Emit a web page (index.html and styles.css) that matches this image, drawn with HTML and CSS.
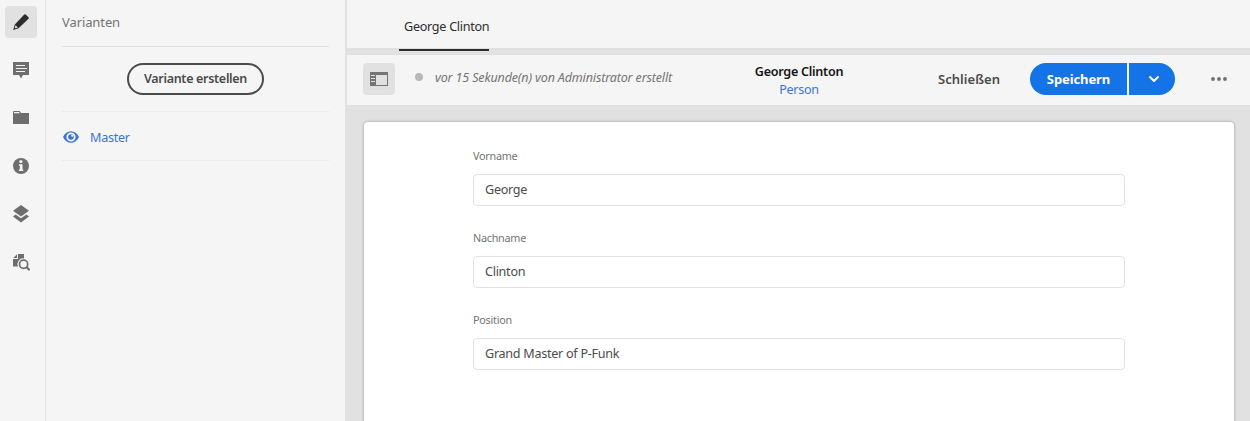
FILE: index.html
```html
<!DOCTYPE html>
<html lang="de">
<head>
<meta charset="utf-8">
<title>George Clinton</title>
<link rel="stylesheet" href="styles.css">
</head>
<body>
<div class="app">
  <nav class="rail">
    <a class="rail-item active"><svg width="18" height="18" viewBox="0 0 18 18"><path fill="#2c2c2c" d="M12.300 1.600a1 1 0 0 1 1.400 0l2.800 2.700a1 1 0 0 1 0 1.400L6.600 15.300 1.200 17 2.800 11.400z"/><path fill="#e1e1e1" d="M3.600 12.200l2.200 2.300-2.300.8-.8-.8z"/></svg></a>
    <a class="rail-item"><svg width="18" height="18" viewBox="0 0 18 18"><path fill="#6e6e6e" d="M1 1h16v13h-6l-2 3.500L7 14H1z"/><path stroke="#f5f5f5" d="M4 4.500h9M4 7.500h11M4 10.500h9"/></svg></a>
    <a class="rail-item"><svg width="18" height="18" viewBox="0 0 18 18"><path fill="#6e6e6e" d="M1 3a1 1 0 0 1 1-1h5.500L9.300 4H17V15H1z"/><path fill="#f5f5f5" d="M2 3h5l1 1.200H2z"/></svg></a>
    <a class="rail-item"><svg width="18" height="18" viewBox="0 0 18 18"><circle cx="9" cy="9" r="8" fill="#6e6e6e"/><circle cx="8.900" cy="4.600" r="1.600" fill="#f5f5f5"/><path fill="#f5f5f5" d="M7 7.300h3.500v5.200H11.300V14H6.800v-1.500h1V8.800H7z"/></svg></a>
    <a class="rail-item"><svg width="18" height="18" viewBox="0 0 18 18"><path fill="#6e6e6e" d="M9 0l8 5.800-8 5.600-8-5.600zM3.600 9.500L9 13.300l5.400-3.800L17 11.400 9 17.500 1 11.400z"/></svg></a>
    <a class="rail-item"><svg width="18" height="18" viewBox="0 0 18 18"><path fill="#6e6e6e" d="M6 1h6v4.400A5.800 5.800 0 0 0 6 13.500H1V6h5zM5 1.300V5H1.300z"/><circle cx="11.600" cy="11.200" r="4.100" fill="#f5f5f5" stroke="#6e6e6e" stroke-width="1.700"/><path stroke="#6e6e6e" stroke-width="2.200" stroke-linecap="round" d="M14.800 14.400l2.100 2.100"/></svg></a>
  </nav>
  <aside class="side">
    <h2 class="side-title">Varianten</h2>
    <div class="create"><button class="create-btn"><span class="create-label">Variante erstellen</span></button></div>
    <a class="variant"><svg width="18" height="18" viewBox="0 0 18 18"><path fill="#3b74d3" fill-rule="evenodd" d="M1 9C2.800 5.300 5.600 3.200 9 3.200S15.200 5.300 17 9c-1.800 3.700-4.600 5.800-8 5.800S2.800 12.700 1 9zM9 4.400a4.600 4.600 0 1 0 0 9.200a4.600 4.600 0 1 0 0-9.200z"/><circle cx="9" cy="9" r="2.800" fill="#3b74d3"/><circle cx="10.300" cy="7.700" r="1.100" fill="#f5f5f5"/></svg><span class="variant-name">Master</span></a>
  </aside>
  <main class="main">
    <header class="tabs"><div class="tab"><span class="tab-label">George Clinton</span></div></header>
    <div class="toolbar">
      <button class="toggle"><svg width="18" height="14" viewBox="0 0 18 14"><path fill="#747474" fill-rule="evenodd" d="M0 0h18v14H0zM6 3v10h11V3z"/><path stroke="#e1e1e1" d="M1 3.500h4M1 6.500h4M1 9.500h4"/></svg></button>
      <i class="dot"></i>
      <span class="status">vor 15 Sekunde(n) von Administrator erstellt</span>
      <div class="heading"><b class="heading-name">George Clinton</b><a class="heading-model">Person</a></div>
      <span class="close">Schließen</span>
      <button class="save"><span class="save-label">Speichern</span></button>
      <button class="save-more"><svg width="12" height="8" viewBox="0 0 12 8"><path fill="none" stroke="#fff" stroke-width="2" stroke-linecap="round" stroke-linejoin="round" d="M2 2l4 4 4-4"/></svg></button>
      <svg class="more" width="16" height="4" viewBox="0 0 16 4"><g fill="#6e6e6e"><circle cx="2" cy="2" r="1.900"/><circle cx="8" cy="2" r="1.900"/><circle cx="14" cy="2" r="1.900"/></g></svg>
    </div>
    <section class="card">
      <div class="field"><label class="label">Vorname</label><div class="input">George</div></div>
      <div class="field"><label class="label">Nachname</label><div class="input">Clinton</div></div>
      <div class="field"><label class="label">Position</label><div class="input">Grand Master of P-Funk</div></div>
    </section>
  </main>
</div>
</body>
</html>
```

FILE: styles.css
```css
* { box-sizing: border-box; }
body { margin: 0; font: 12.6px/18px "Noto Sans", "Open Sans", sans-serif; letter-spacing: -0.28px; color: #4b4b4b; background: #f5f5f5; }
button { font: inherit; letter-spacing: inherit; margin: 0; padding: 0; border: 0; }
svg { display: block; flex: none; }
.app { display: flex; height: 421px; overflow: hidden; }
.rail { width: 46px; flex: none; border-right: 1px solid #e1e1e1; padding: 6px 0 0 5px; display: flex; flex-direction: column; gap: 16px; }
.rail-item { width: 32px; height: 32px; flex: none; display: flex; align-items: center; justify-content: center; border-radius: 4px; }
.active { background: #e1e1e1; }
.side { width: 299px; flex: none; padding: 0 16px; }
.side-title { margin: 0; height: 47px; padding-top: 13px; font-size: 13px; font-weight: 400; letter-spacing: -0.1px; color: #747474; border-bottom: 1px solid #e1e1e1; }
.create { height: 65px; border-bottom: 1px solid #eaeaea; display: flex; align-items: center; justify-content: center; }
.create-btn { width: 137px; height: 32px; border: 2px solid #4b4b4b; border-radius: 16px; background: none; color: #4b4b4b; font-weight: 600; font-size: 12.5px; white-space: nowrap; }
.create-label { letter-spacing: -0.3px; }
.variant { height: 49px; border-bottom: 1px solid #eaeaea; display: flex; align-items: center; color: #3b74d3; gap: 10px; padding-top: 2px; }
.variant-name { padding-top: 2px; }
.main { flex: 1; border-left: 2px solid #e1e1e1; background: #e1e1e1; }
.tabs { height: 51px; padding-left: 52px; background: linear-gradient(#f5f5f5 48px, #e1e1e1 48px); }
.tab { width: 90px; height: 51px; padding: 18px 0 0 5px; border-bottom: 2px solid #2c2c2c; color: #2c2c2c; white-space: nowrap; }
.toolbar { height: 50px; margin-top: 4px; padding-left: 16px; background: #f5f5f5; display: flex; align-items: center; white-space: nowrap; }
.toggle { width: 32px; height: 32px; flex: none; margin-bottom: 2px; border-radius: 4px; background: #e1e1e1; display: flex; align-items: center; justify-content: center; }
.dot { width: 8px; height: 8px; flex: none; margin: 0 12px 6px 20px; border-radius: 50%; background: #b9b9b9; }
.status { width: 320px; margin-bottom: 5px; font-style: italic; color: #747474; font-size: 12.5px; letter-spacing: -0.14px; }
.heading { width: 88px; display: flex; flex-direction: column; align-items: center; margin-top: 1px; }
.heading-name { color: #151515; font-weight: 600; }
.heading-model { color: #3b74d3; }
.close { width: 92px; margin: 0 0 2px 95px; font-size: 13px; font-weight: 600; letter-spacing: 0.05px; }
.save { width: 97px; height: 32px; margin: 0 2px 2px 0; border-radius: 16px 0 0 16px; background: #1473e6; color: #fff; font-size: 13px; font-weight: 700; letter-spacing: -0.1px; }
.save-more { width: 46px; height: 32px; margin-bottom: 2px; padding-left: 19px; border-radius: 0 16px 16px 0; background: #1473e6; }
.more { margin: 0 0 2px 36px; }
.card { width: 870px; height: 320px; margin: 17px 0 0 17px; padding: 25px 109px 0; background: #fff; border-radius: 4px; box-shadow: 0 0 3px rgba(0,0,0,.35); display: flex; flex-direction: column; gap: 23px; }
.field { flex: none; }
.label { display: block; height: 18px; margin-bottom: 9px; font-size: 10.8px; letter-spacing: -0.25px; color: #747474; }
.input { height: 32px; border: 1px solid #e1e1e1; border-radius: 4px; padding: 6px 11px; white-space: nowrap; }
```
